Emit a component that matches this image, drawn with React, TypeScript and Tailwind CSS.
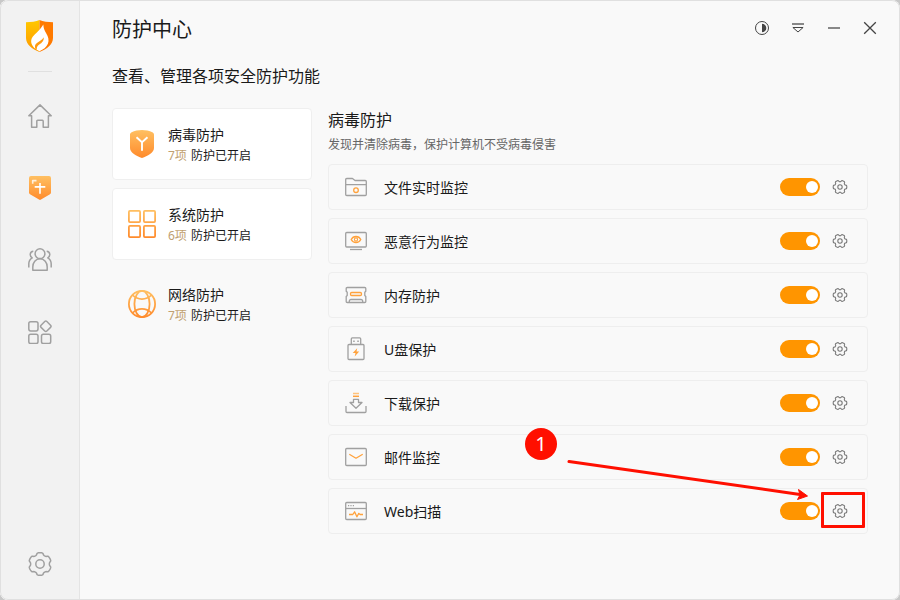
import type { ReactNode } from "react";

const GRAY = "#a0a0a0";
const ORANGE = "#ffa23c";

// Outline of a six-lobed cog centred on (12, 12), with flattened lobes
function cogPath(radius: number, depth: number, phase: number) {
  const points: string[] = [];
  for (let i = 0; i < 120; i++) {
    const a = (i / 120) * Math.PI * 2;
    const r = radius + depth * Math.tanh(2.5 * (Math.cos(6 * a + phase) + 0.35));
    points.push(`${(12 + r * Math.cos(a)).toFixed(2)} ${(12 + r * Math.sin(a)).toFixed(2)}`);
  }
  return `M${points.join("L")}Z`;
}

const bigCog = cogPath(10.3, 1, Math.PI);
const smallCog = cogPath(9, 1.2, 0);

function LineIcon({ children }: { children: ReactNode }) {
  return (
    <svg viewBox="0 0 24 24" className="size-6 shrink-0" fill="none" stroke={GRAY} strokeWidth="1.3" strokeLinejoin="round" aria-hidden="true">
      {children}
    </svg>
  );
}

function WarmGradient({ id, height }: { id: string; height: number }) {
  return (
    <defs>
      <linearGradient id={id} gradientUnits="userSpaceOnUse" x1="0" y1="0" x2="0" y2={height}>
        <stop offset="0" stopColor="#ffc062" />
        <stop offset="1" stopColor="#ff8a2b" />
      </linearGradient>
    </defs>
  );
}

function Logo() {
  return (
    <svg viewBox="0 0 27 32" className="h-8 w-[27px]" aria-hidden="true">
      <defs>
        <linearGradient id="logo-left" x1="0" y1="0" x2="0" y2="1">
          <stop offset="0" stopColor="#ffc800" />
          <stop offset="1" stopColor="#ff9800" />
        </linearGradient>
      </defs>
      <path d="M13.5 0C10 1.6 5 2.2 0 2.2V18c0 6.5 6 11 13.5 14Z" fill="url(#logo-left)" />
      <path d="M13.5 0C17 1.6 22 2.2 27 2.2V18c0 6.5-6 11-13.5 14Z" fill="#ff7a00" />
      <path
        d="M17.3 4.6c.2 4 1.4 6.2 3 8.800 2 3.300 3 6.700 1.600 10.400-1.300 3.400-4.700 5.800-8.400 7.500-1.600-.7-3-1.500-4.200-2.500C6 26.200 4.200 22.500 5.700 18.600c1.100-3 4.500-5 7.300-8.300 1.500-1.700 3.100-3.400 4.300-5.700Z"
        fill="#fff"
      />
      <path d="M17.600 17.200c-1.200 3.200-5.300 4.200-7.500 6.500-1.300 1.400-1.400 3-.8 5.100l1.500 1c-.2-2.600.5-4 2.500-5.300 2.700-1.800 5-3.800 4.300-7.300Z" fill="#ff9a10" />
    </svg>
  );
}

const navItems = [
  {
    label: "首页",
    icon: (
      <g strokeWidth="1.5">
        <path d="M12 .9 23.2 11.7h-2.8v11.5h-5.2v-6a.9.9 0 0 0-.9-.9H9.7a.9.9 0 0 0-.9.9v6H3.6V11.7H.8Z" />
      </g>
    ),
  },
  {
    label: "防护中心",
    icon: (
      <g stroke="none">
        <WarmGradient id="nav-shield" height={24} />
        <path d="M3 0h18a2 2 0 0 1 2 2v14.5a2 2 0 0 1-1 1.700l-9 5.400a2 2 0 0 1-2 0l-9-5.400a2 2 0 0 1-1-1.700V2a2 2 0 0 1 2-2Z" fill="url(#nav-shield)" />
        <path d="M12 7v10.700M6.700 10.900h10.600" stroke="#fff" strokeWidth="1.6" />
        <path d="M4.700 7.800V4.600h3.800" stroke="#fff" strokeOpacity=".8" strokeWidth="1.6" />
      </g>
    ),
  },
  {
    label: "家长控制",
    icon: (
      <g strokeWidth="1.5">
        <circle cx="12" cy="5.7" r="4.9" />
        <path d="M4.800 22.300V19c0-4.600 2.800-8.200 7.200-8.200s7.200 3.600 7.200 8.200v3.300Z" />
        <path d="M5.300 3.200C1.600 3.600 1.300 8.200 4.200 9.800 1.700 11.200.8 13.500.8 16v3.500M18.700 3.200c3.700.4 4 5 1.100 6.600 2.500 1.400 3.400 3.700 3.400 6.200v3.500" />
      </g>
    ),
  },
  {
    label: "安全工具",
    icon: (
      <g strokeWidth="1.5">
        <rect x=".8" y="1.700" width="9.200" height="9.200" rx="1.800" />
        <rect x=".8" y="14.300" width="9.200" height="9.200" rx="1.800" />
        <rect x="13.500" y="14.300" width="9.200" height="9.200" rx="1.800" />
        <rect x="13.700" y="2.200" width="8.200" height="8.200" rx="1.500" transform="rotate(45 17.800 6.300)" />
      </g>
    ),
  },
];

const categories = [
  {
    title: "病毒防护",
    count: "7项",
    className: "border-[#efefef] bg-white",
    icon: (
      <>
        <WarmGradient id="virus" height={28} />
        <path d="M14 0c3.500 0 7.500.9 10.400 2.200A2.500 2.500 0 0 1 26 4.500V18c0 4.500-6.500 8.300-12 10C8.500 26.300 2 22.500 2 18V4.500a2.500 2.500 0 0 1 1.600-2.300C6.500.9 10.500 0 14 0Z" fill="url(#virus)" />
        <path d="m8.500 7.200 5.500 5 5.500-5M14 12.200v8.600" stroke="#fff" strokeWidth="1.9" />
      </>
    ),
  },
  {
    title: "系统防护",
    count: "6项",
    className: "border-[#efefef] bg-white",
    icon: (
      <g stroke="url(#system)" strokeWidth="1.8">
        <WarmGradient id="system" height={28} />
        <rect x=".9" y=".9" width="11.200" height="11.200" rx="1" />
        <rect x="15.900" y=".9" width="11.200" height="11.200" rx="1" />
        <rect x=".9" y="15.900" width="11.200" height="11.200" rx="1" />
        <rect x="15.900" y="15.900" width="11.200" height="11.200" rx="1" />
      </g>
    ),
  },
  {
    title: "网络防护",
    count: "7项",
    className: "border-transparent",
    icon: (
      <g stroke="url(#network)" strokeWidth="1.8">
        <WarmGradient id="network" height={28} />
        <circle cx="14" cy="14" r="13.100" />
        <ellipse cx="14" cy="14" rx="7.600" ry="13.100" />
        <path d="M4.600 5c5.200 5.400 13.600 5.400 18.800 0M4.600 23c5.200-5.400 13.600-5.400 18.800 0" />
      </g>
    ),
  },
];

const features = [
  {
    name: "文件实时监控",
    icon: (
      <>
        <path d="M1.700 19.500v-15a1 1 0 0 1 1-1h5.800l2.500 2h10.300a1 1 0 0 1 1 1v13a1 1 0 0 1-1 1H2.700a1 1 0 0 1-1-1ZM1.700 9.700h20.600" />
        <circle cx="12" cy="15.200" r="2.300" stroke={ORANGE} />
      </>
    ),
  },
  {
    name: "恶意行为监控",
    icon: (
      <>
        <rect x="1.700" y="3.500" width="20.600" height="14.500" rx="1" />
        <path d="M6 20.500h12" />
        <path d="M7.200 10.500c2-4 7.600-4 9.600 0-2 4-7.600 4-9.600 0Z" stroke={ORANGE} />
        <circle cx="12" cy="10.500" r="1.600" stroke={ORANGE} strokeWidth="1.1" />
      </>
    ),
  },
  {
    name: "内存防护",
    icon: (
      <>
        <path d="M3.200 4.500h17.600a1 1 0 0 1 1 1v2.700l-1 1v3.300l1 1v5a1 1 0 0 1-1 1H3.200a1 1 0 0 1-1-1v-5l1-1V9.200l-1-1V5.500a1 1 0 0 1 1-1Z" />
        <path d="M5.300 19.300v-1.100a1.700 1.700 0 0 1 1.700-1.700h10a1.700 1.700 0 0 1 1.700 1.700v1.100" />
        <rect x="6.500" y="9.500" width="11" height="3" rx="1.200" stroke={ORANGE} />
      </>
    ),
  },
  {
    name: "U盘保护",
    icon: (
      <>
        <rect x="4" y="7.500" width="16" height="15" rx="1" />
        <path d="M7.300 7.500V1.900a1 1 0 0 1 1-1h7.400a1 1 0 0 1 1 1v5.600" />
        <path d="M9.200 4.200h1.500M13.300 4.200h1.500" strokeWidth="1.500" />
        <path d="m13.200 11.200-4.500 4.800h2.800l-.8 3.500 4.500-4.900h-2.700Z" fill={ORANGE} stroke="none" />
      </>
    ),
  },
  {
    name: "下载保护",
    icon: (
      <>
        <path d="M2 15v5.500a1 1 0 0 0 1 1h18a1 1 0 0 0 1-1V15" />
        <path d="M9.500 8.300h5v3.200H18l-6 5.800-6-5.800h3.500Z" />
        <path d="M9 2.500h6" stroke="#ffc37c" strokeWidth="1.5" />
        <path d="M9 5.300h6" stroke={ORANGE} strokeWidth="1.5" />
      </>
    ),
  },
  {
    name: "邮件监控",
    icon: (
      <>
        <rect x="1.700" y="3.500" width="20.600" height="17" rx="1" />
        <path d="m5.300 9.200 6.700 4 6.700-4" stroke={ORANGE} />
      </>
    ),
  },
  {
    name: "Web扫描",
    icon: (
      <>
        <rect x="1.700" y="3.500" width="20.600" height="17" rx="1" />
        <path d="M1.700 9.500h20.600" />
        <path d="M4 6.600h1.200M6.400 6.600h1.200M8.800 6.600H10" />
        <path d="M5 15.500h3.800l1.800-2.700 2.300 5 1.900-3.400 1.300 1.100H19" stroke={ORANGE} />
      </>
    ),
  },
];

const windowButtons = [
  {
    label: "主题",
    icon: (
      <>
        <circle cx="8" cy="8" r="6.500" />
        <path d="M8 3.700a4.300 4.300 0 0 1 0 8.600Z" fill="#444" stroke="none" />
      </>
    ),
  },
  {
    label: "菜单",
    icon: (
      <>
        <path d="M2 4h12" stroke="#888" strokeWidth="2" />
        <path d="M2.900 7.500h10.200L8 12Z" />
      </>
    ),
  },
  { label: "最小化", icon: <path d="M2 8h12" stroke="#888" strokeWidth="2" /> },
  { label: "关闭", icon: <path d="m2.200 2.200 11.600 11.600M13.800 2.200 2.200 13.800" strokeWidth="1.300" /> },
];

function Callout() {
  return (
    <div className="pointer-events-none absolute inset-0">
      <span className="absolute -top-[61px] right-[310px] flex size-8 items-center justify-center rounded-full bg-[#ff0f00] text-xl text-white">1</span>
      <svg viewBox="0 0 250 45" className="absolute -top-[29px] right-[58px] h-[45px] w-[250px]" aria-hidden="true">
        <path d="M10 1.500 241 34.500" stroke="#ff0f00" strokeWidth="3" strokeLinecap="round" />
        <path d="M248.500 36 238.500 39.500 241 35 239.500 29.500Z" fill="#ff0f00" stroke="#ff0f00" strokeLinejoin="round" />
      </svg>
      <span className="absolute top-[3px] right-[2px] h-9 w-11 rounded-[1px] border-3 border-[#ff0f00]" />
    </div>
  );
}

function Sidebar() {
  return (
    <aside className="flex w-20 shrink-0 flex-col items-center border-r border-[#e4e4e4] bg-[#f2f2f2] pt-5 pb-3">
      <Logo />
      <div className="mt-[19px] h-px w-6 bg-[#e0e0e0]" />
      <nav className="mt-5 flex flex-col gap-6">
        {navItems.map((item) => (
          <button key={item.label} type="button" aria-label={item.label} className="flex size-12 items-center justify-center">
            <LineIcon>{item.icon}</LineIcon>
          </button>
        ))}
      </nav>
      <button type="button" aria-label="设置" className="mt-auto flex size-12 items-center justify-center">
        <LineIcon>
          <path d={bigCog} strokeWidth="1.5" />
          <circle cx="12" cy="12" r="4.200" strokeWidth="1.5" />
        </LineIcon>
      </button>
    </aside>
  );
}

export default function App() {
  return (
    <div className="min-h-screen bg-[#c8c8c8] font-['Noto_Sans','Noto_Sans_CJK_SC',sans-serif] text-[#1a1a1a]">
      <div className="relative flex min-h-screen overflow-hidden rounded-lg bg-[#f9f9f9]">
        <Sidebar />

        <main className="min-w-0 flex-1 pb-8">
          <header className="flex h-14 items-center justify-between pr-3 pl-8">
            <h1 className="pt-1 text-xl">防护中心</h1>
            <div className="flex">
              {windowButtons.map((button) => (
                <button key={button.label} type="button" aria-label={button.label} className="flex size-9 items-center justify-center">
                  <svg viewBox="0 0 16 16" className="size-4" fill="none" stroke="#444" aria-hidden="true">
                    {button.icon}
                  </svg>
                </button>
              ))}
            </div>
          </header>

          <div className="px-8 pt-2">
            <p className="text-base leading-6">查看、管理各项安全防护功能</p>

            <div className="mt-5 flex items-start gap-4">
              <div className="flex w-[200px] shrink-0 flex-col gap-2">
                {categories.map((category) => (
                  <button
                    key={category.title}
                    type="button"
                    className={`flex h-[72px] items-center gap-3 rounded border px-[15px] text-left ${category.className}`}
                  >
                    <svg viewBox="0 0 28 28" className="size-7 shrink-0" fill="none" aria-hidden="true">
                      {category.icon}
                    </svg>
                    <span className="flex flex-col pt-1">
                      <span className="text-sm leading-5">{category.title}</span>
                      <span className="flex gap-1 text-xs leading-[22px]">
                        <span className="text-[#c0a070]">{category.count}</span>
                        <span>防护已开启</span>
                      </span>
                    </span>
                  </button>
                ))}
              </div>

              <section className="min-w-0 flex-1">
                <h2 className="text-base leading-6">病毒防护</h2>
                <p className="text-xs leading-[26px] text-[#666]">发现并清除病毒，保护计算机不受病毒侵害</p>

                <ul className="mt-1.5 flex flex-col gap-2">
                  {features.map((feature, i) => (
                    <li key={feature.name} className="relative flex h-[46px] items-center rounded border border-[#eee] pr-[19px] pl-[15px]">
                      <label htmlFor={`feature-${i}`} className="flex flex-1 items-center gap-4 text-sm">
                        <LineIcon>{feature.icon}</LineIcon>
                        <span className="pt-0.5">{feature.name}</span>
                      </label>
                      <input
                        id={`feature-${i}`}
                        type="checkbox"
                        role="switch"
                        defaultChecked
                        className="flex h-[18px] w-10 appearance-none items-center rounded-full bg-[#c8c8c8] px-0.5 before:size-3 before:rounded-full before:bg-white checked:justify-end checked:bg-[#ff9500]"
                      />
                      <button type="button" aria-label={`${feature.name}设置`} className="ml-3">
                        <svg viewBox="0 0 24 24" className="size-4" fill="none" stroke="#777" strokeWidth="1.600" strokeLinejoin="round" aria-hidden="true">
                          <path d={smallCog} />
                          <circle cx="12" cy="12" r="3.300" />
                        </svg>
                      </button>
                      {i === features.length - 1 && <Callout />}
                    </li>
                  ))}
                </ul>
              </section>
            </div>
          </div>
        </main>

        {/* Window frame */}
        <div className="pointer-events-none absolute inset-0 rounded-lg border border-[#e0e0e0]" />
      </div>
    </div>
  );
}
